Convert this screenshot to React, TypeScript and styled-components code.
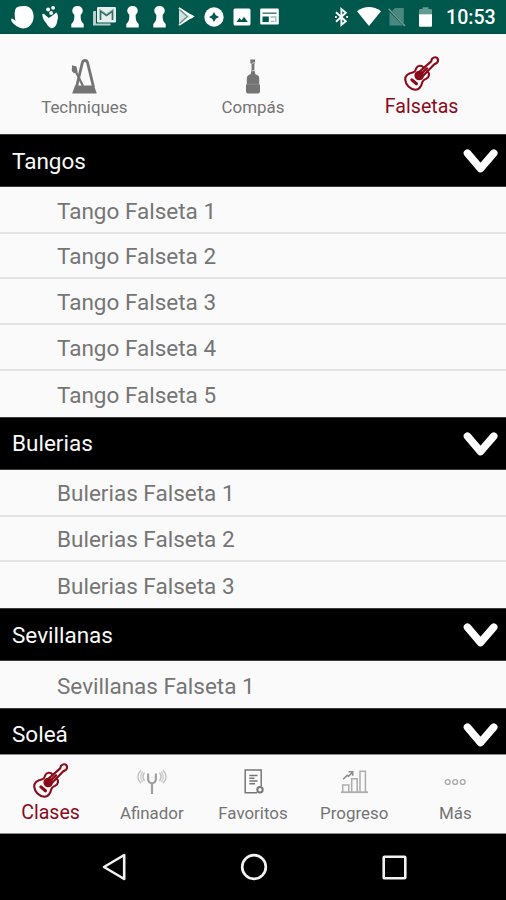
import React from "react";
import styled, { createGlobalStyle } from "styled-components";

const GlobalStyle = createGlobalStyle`
  *, *::before, *::after { box-sizing: border-box; }
  body { margin: 0; background: #000; font-family: Roboto, sans-serif; }
  svg { display: block; flex: none; overflow: visible; }
`;

const Screen = styled.div`
  width: 506px;
  height: 900px;
  display: flex;
  flex-direction: column;
  background: #fafafa;
  overflow: hidden;
`;

const StatusBar = styled.header`
  flex: none;
  height: 34px;
  padding: 0 10px 0 8.8px;
  display: flex;
  align-items: center;
  background: #00574b;
  border-bottom: 1px solid #004d42;
  color: #fff;
`;

const StatusGroup = styled.div<{ $cell: number; $right?: boolean }>`
  display: grid;
  grid-auto-flow: column;
  grid-auto-columns: ${(p) => p.$cell}px;
  justify-items: center;
  align-items: center;
  margin-left: ${(p) => (p.$right ? "auto" : "0")};
`;

const Clock = styled.time`
  width: 50px;
  margin-left: 7px;
  font-size: 19.6px;
  font-weight: 500;
  line-height: 34px;
  padding-top: 2px;
  white-space: nowrap;
`;

const TopTabs = styled.nav`
  flex: none;
  height: 100px;
  display: grid;
  grid-template-columns: repeat(3, 1fr);
`;

const BottomTabs = styled.nav`
  flex: none;
  height: 80px;
  display: grid;
  grid-template-columns: repeat(5, 1fr);
  border-top: 1px solid #8c8c8c;
  border-bottom: 1px solid #8c8c8c;
  background: #fafafa;
`;

const Tab = styled.button<{ $active?: boolean; $top: number; $labelTop: number }>`
  border: 0;
  padding: ${(p) => p.$top}px 0 0;
  background: none;
  display: flex;
  flex-direction: column;
  align-items: center;
  font-family: inherit;
  color: ${(p) => (p.$active ? "#8a0a1a" : "#747474")};
  font-size: ${(p) => (p.$active ? 19.6 : 16.9)}px;

  span {
    line-height: 20px;
    margin-top: ${(p) => p.$labelTop}px;
    white-space: nowrap;
  }
`;

const IconSlot = styled.div<{ $height: number }>`
  height: ${(p) => p.$height}px;
  display: flex;
  align-items: center;
  justify-content: center;
`;

const Lessons = styled.main`
  flex: 1;
  min-height: 0;
  overflow: hidden;
`;

const SectionHeader = styled.h2`
  margin: 0;
  height: 53px;
  padding: 0 8px 0 12px;
  display: flex;
  align-items: center;
  justify-content: space-between;
  background: #000;
  border: solid #3c3c3c;
  border-width: 1px 0;
  color: #fafafa;
  font-size: 22.5px;
  font-weight: 400;

  svg { margin-top: 3px; }
`;

const LessonList = styled.ul`
  margin: 0;
  padding: 0.9px 0 0;
  list-style: none;
`;

const Lesson = styled.li`
  height: 45.8px;
  padding: 1.6px 0 0 57px;
  display: flex;
  align-items: center;
  color: #757575;
  font-size: 22.5px;

  &:not(:last-child) { border-bottom: 2px solid #e4e4e4; }
`;

const SystemNav = styled.footer`
  flex: none;
  height: 66px;
  padding: 0 42px 0 44px;
  display: grid;
  grid-template-columns: repeat(3, 1fr);
  justify-items: center;
  align-items: center;
  background: #000;
`;

const Guitar = () => (
  <svg width="35" height="35" viewBox="0 0 35 35" fill="none" stroke="currentColor" strokeWidth="2.1" strokeLinecap="round" strokeLinejoin="round">
    <path d="M19.6 11.6C17.4 8.8 13.6 9.2 12.2 12.4C11.6 14.2 11.4 15.6 9.4 16.2C4.8 17 1.1 19.6 1.2 23.7C1.7 29 6 33.2 11.3 33.7C15.2 33.6 17.4 30.3 18.4 26C19 23.8 20.2 23.6 22 22.9C25.5 21.2 26 17.5 23.4 15.2" />
    <circle cx="15.2" cy="19.5" r="4.8" fill="currentColor" stroke="none" />
    <path d="M15.6 15.6L27.2 5.4L28 2.8Q30.6 .2 33.2 1.9Q35.2 4.6 32.8 7L30.3 8.2L19.4 19.6" />
    <path d="M17.4 17.6L23 12.4" strokeWidth="2.4" />
    <path d="M7.9 23.9L12.4 27.7" strokeWidth="3.2" />
  </svg>
);

const Metronome = () => (
  <svg width="25" height="35" viewBox="0 0 25 35" fill="none" stroke="currentColor">
    <path d="M4.5 28L10.3 3.8Q11 1.5 13 1.5T15.6 3.8L21.5 28" strokeWidth="2.8" />
    <path d="M3 26.5H22L24.8 34.5H.2Z" fill="currentColor" stroke="none" />
    <path d="M2.5 10L11 27" strokeWidth="2.2" />
    <path d="M.1 6.2L4.5 7.6L5.6 12.7L2 14.3L-.2 12Z" fill="currentColor" stroke="none" />
  </svg>
);

const Bottle = () => (
  <svg width="14" height="35" viewBox="0 0 14 35" fill="currentColor">
    <path d="M4.3.5H9.1V4.3L8.4 5V11L9.4 15.2Q13.2 16.3 13.2 19V25L14 26V32.7Q13.8 34.5 12 34.5H2Q.2 34.4 0 32.5V26L.8 25V19Q.9 16.2 4.6 15.2L5.6 11V5L4.3 4Z" />
    <path d="M6 4.4L9 3.5M6 12L8.8 11.2" stroke="#fafafa" strokeWidth=".7" />
    <path d="M1 25.3H13" stroke="#969696" strokeWidth=".6" />
  </svg>
);

const TuningFork = () => (
  <svg width="30" height="26" viewBox="0 0 30 26" fill="none" stroke="#a8a8a8" strokeWidth="1.4">
    <path d="M11.1 4.5V10Q11.2 13.8 15 14.3Q18.8 13.8 18.9 10V4.5M15 14.3V25" strokeWidth="2.2" stroke="#a0a0a0" />
    <path d="M7.5 3.7Q4.6 7.8 7.5 12M4 1.2Q-2.2 7.8 4 14.3M22.5 3.7Q25.4 7.8 22.5 12M26 1.2Q32.2 7.8 26 14.3" stroke="#c0c0c0" />
    <path d="M5.8 2.5Q1.8 7.8 5.8 13.2M24.2 2.5Q28.2 7.8 24.2 13.2" stroke="#d0d0d0" />
  </svg>
);

const NoteSheet = () => (
  <svg width="20" height="25" viewBox="-1 0 20 25" fill="none" stroke="#777" strokeWidth="1.5">
    <path d="M17.2 17V1H1.2V23.8H13" />
    <path d="M5.3 6.4H13.5M5.3 9.2H10.5M5.3 11.9H13.5M5.3 14.7H11" />
    <circle cx="16" cy="20.7" r="2.7" strokeWidth="2" />
  </svg>
);

const BarChart = () => (
  <svg width="27" height="24" viewBox="0 0 27 24" fill="none" stroke="#adadad" strokeWidth="1.5">
    <path d="M0 22.2H27" strokeWidth="1.8" />
    <path d="M1.7 22V15H7.8V22M10.7 22V8.8H16.2V22M19 22V1.2H24.4V22" />
    <path d="M2.2 9.3L6.3 5.3L7.6 6.3L11 2.7M7.5 1.7H11.7V5.8" stroke="#8b8b8b" strokeWidth="1.6" />
  </svg>
);

const MoreDots = () => (
  <svg width="22" height="8" viewBox="0 0 22 8" fill="none" stroke="#aaa" strokeWidth="1.4">
    <circle cx="3.7" cy="4" r="2.4" />
    <circle cx="11.2" cy="4" r="2.4" />
    <circle cx="18.7" cy="4" r="2.4" />
  </svg>
);

const Chevron = () => (
  <svg width="35" height="26" viewBox="0 0 35 26" fill="none" stroke="#fff" strokeWidth="7.6" strokeLinecap="round" strokeLinejoin="round">
    <path d="M4.5 4.2L17.5 19.5L30.7 4.2" />
  </svg>
);

const Blob = () => (
  <svg width="23" height="24" viewBox="0 0 23 24" fill="#fff">
    <path d="M5 3Q7 .7 14 1Q18 1 21 5Q24 11 21.5 17Q18 23.6 12 23.5Q5 22.4 1 17Q-.7 13.8 1 13.4Q3 14.2 4.5 16Q2.5 7 5 3Z" />
  </svg>
);

const Hand = () => (
  <svg width="17" height="24" viewBox="-.8 0 17 24" fill="#fff">
    <path d="M.5 9Q2 8 4 10.5L7 13L10 11L14.5 7.5Q17.3 10 15.5 16Q14.5 22.7 10 23.2Q7 23 5 19Q0 13 .5 9Z" />
    <circle cx="6.3" cy="4.5" r="2" /><circle cx="11.3" cy="2.8" r="1.9" /><circle cx="9.3" cy="8" r="1.9" />
  </svg>
);

const Pawn = () => (
  <svg width="13" height="22" viewBox="0 0 13 22" fill="#fff">
    <path d="M6.5 0Q11.4 0 11.8 4.7Q11.8 6.9 9.7 8.7Q9.4 14 11 16L12.7 18V21.5H.3V18L2 16Q3.6 14 3.3 8.7Q1.2 6.9 1.2 4.7Q1.6 0 6.5 0Z" />
  </svg>
);

const Mail = () => (
  <svg width="23" height="21" viewBox="0 0 23 21">
    <path d="M3 5H1.2Q0 5 0 6V19.5H17.5V17.5H3Z" fill="#b9cfcb" />
    <rect x="4" y="1" width="19" height="15.6" rx="1.3" fill="#e6efee" />
    <path d="M7.5 14V5L13.5 9.5L19.5 5V14" fill="none" stroke="#2f6f66" strokeWidth="1.7" />
    <path d="M6 3L13.5 8L21 3" fill="none" stroke="#8eafa9" strokeWidth="1" />
  </svg>
);

const PlayStore = () => (
  <svg width="17" height="19" viewBox="0 0 17 19">
    <path d="M1 .8V18.2L13 10.5L16.7 9.4L13 8Z" fill="#d3e2df" />
    <path d="M1 1L14 9.5L1 18" stroke="#fff" strokeWidth="2" fill="none" />
    <path d="M1.5 2.5L9.4 9.5L1.5 16.5" stroke="#5d928a" strokeWidth="1.2" fill="none" />
    <path d="M12.4 7L16.6 9.5L12.4 12Z" fill="#fff" />
  </svg>
);

const Compass = () => (
  <svg width="20" height="20" viewBox="0 0 20 20">
    <circle cx="10" cy="10" r="9.7" fill="#fff" />
    <path d="M10 5L11.8 8.2L15 10L11.8 11.8L10 15L8.2 11.8L5 10L8.2 8.2Z" fill="#00574b" />
  </svg>
);

const Picture = () => (
  <svg width="18" height="18" viewBox="0 0 18 18">
    <rect x=".5" y=".5" width="17" height="17" rx="1.5" fill="#fff" />
    <path d="M3.5 14L6.5 10L8.6 12.3L11 8.7L14.8 14Z" fill="#00574b" />
  </svg>
);

const NewsPanel = () => (
  <svg width="19" height="17" viewBox="0 0 19 17">
    <rect x=".2" y=".5" width="18.6" height="16" rx="1" fill="#fff" />
    <path d="M2.5 5.2H16.5" stroke="#39776e" strokeWidth="1.4" />
    <rect x="2.5" y="8.5" width="6.3" height="5.6" fill="#00574b" />
    <path d="M10.5 9H16.5M10.5 13.4H14.5M15.8 9V14" stroke="#9ababa" strokeWidth="1.3" />
  </svg>
);

const Bluetooth = () => (
  <svg width="13" height="20" viewBox="0 0 13 20" fill="none" stroke="#fff" strokeWidth="1.9">
    <path d="M1 5.2L10.8 14.3L6.4 18V2L10.8 5.7L1 14.8" />
    <path d="M0 10H1.8M11.2 10H13" />
  </svg>
);

const Wifi = () => (
  <svg width="24" height="19" viewBox="0 0 24 19" fill="#fff">
    <path d="M0 4.2Q12-4 24 4.2L12 19Z" />
  </svg>
);

const NoSim = () => (
  <svg width="18" height="20" viewBox="0 0 18 20">
    <path d="M7 1H15.8V16.5L4 4Z M1.5 5V18.5H15Z" fill="#4a877e" />
    <path d="M.6 1.8L17 19" stroke="#6b9e97" strokeWidth="1.5" />
  </svg>
);

const Battery = () => (
  <svg width="13" height="20" viewBox="0 0 13 20">
    <path d="M0 3.2Q0 2 1.2 2H3.5V.2H9.5V2H11.8Q13 2 13 3.2V7.5H0Z" fill="#659a92" />
    <path d="M0 7.2H13V18.7Q13 19.7 12 19.7H1Q0 19.7 0 18.7Z" fill="#fff" />
  </svg>
);

const sections = [
  { title: "Tangos", lesson: "Tango Falseta", count: 5 },
  { title: "Bulerias", lesson: "Bulerias Falseta", count: 3 },
  { title: "Sevillanas", lesson: "Sevillanas Falseta", count: 1 },
  { title: "Soleá", lesson: "Soleá Falseta", count: 0 },
];

const topTabs = [
  { label: "Techniques", icon: <Metronome /> },
  { label: "Compás", icon: <Bottle /> },
  { label: "Falsetas", icon: <Guitar />, active: true },
];

const bottomTabs = [
  { label: "Clases", icon: <Guitar />, active: true },
  { label: "Afinador", icon: <TuningFork /> },
  { label: "Favoritos", icon: <NoteSheet /> },
  { label: "Progreso", icon: <BarChart /> },
  { label: "Más", icon: <MoreDots /> },
];

export default function App() {
  return (
    <Screen>
      <GlobalStyle />
      <StatusBar>
        <StatusGroup $cell={27.4}>
          <Blob /><Hand /><Pawn /><Mail /><Pawn /><Pawn /><PlayStore /><Compass /><Picture /><NewsPanel />
        </StatusGroup>
        <StatusGroup $cell={28} $right>
          <Bluetooth /><Wifi /><NoSim /><Battery />
        </StatusGroup>
        <Clock>10:53</Clock>
      </StatusBar>
      <TopTabs>
        {topTabs.map((t) => (
          <Tab key={t.label} $active={t.active} $top={t.active ? 22 : 25} $labelTop={t.active ? 6 : 3}>
            <IconSlot $height={35}>{t.icon}</IconSlot>
            <span>{t.label}</span>
          </Tab>
        ))}
      </TopTabs>
      <Lessons>
        {sections.map((s) => (
          <section key={s.title}>
            <SectionHeader>{s.title}<Chevron /></SectionHeader>
            <LessonList>
              {Array.from({ length: s.count }, (_, i) => (
                <Lesson key={i}>{s.lesson} {i + 1}</Lesson>
              ))}
            </LessonList>
          </section>
        ))}
      </Lessons>
      <BottomTabs>
        {bottomTabs.map((t) => (
          <Tab key={t.label} $active={t.active} $top={t.active ? 8 : 13} $labelTop={t.active ? 5 : 8}>
            <IconSlot $height={t.active ? 35 : 27}>{t.icon}</IconSlot>
            <span>{t.label}</span>
          </Tab>
        ))}
      </BottomTabs>
      <SystemNav>
        <svg width="24" height="28" viewBox="0 0 24 28" fill="none" stroke="#f2f2f2" strokeWidth="2.6" strokeLinejoin="round">
          <path d="M2 14L22.2 2V26Z" />
        </svg>
        <svg width="28" height="28" viewBox="0 0 28 28" fill="none" stroke="#f2f2f2" strokeWidth="2.7">
          <circle cx="14" cy="14" r="11.8" />
        </svg>
        <svg width="25" height="25" viewBox="0 0 25 25" fill="none" stroke="#f2f2f2" strokeWidth="2.6">
          <rect x="1.7" y="1.7" width="21.6" height="21.6" rx=".8" />
        </svg>
      </SystemNav>
    </Screen>
  );
}
